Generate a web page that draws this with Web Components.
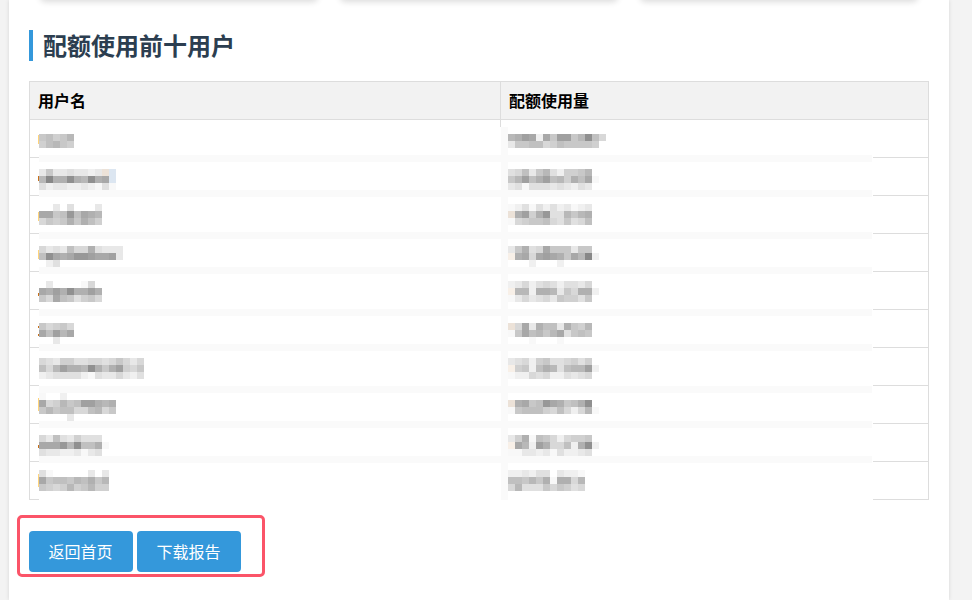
<!DOCTYPE html>
<html lang="zh-CN">
<head>
<meta charset="utf-8">
<title>配额使用报告</title>
<style>
  html, body { margin: 0; height: 100%; overflow: hidden; background: #f3f3f3; }
  body { font-family: "Noto Sans CJK SC", "Liberation Sans", sans-serif; }
</style>
</head>
<body>
<report-page>
  <summary-row>
    <summary-card></summary-card>
    <summary-card></summary-card>
    <summary-card></summary-card>
  </summary-row>
  <section-title>配额使用前十用户</section-title>
  <quota-table first-heading="用户名" second-heading="配额使用量" rows="10"></quota-table>
  <report-actions>
    <action-button>返回首页</action-button>
    <action-button>下载报告</action-button>
  </report-actions>
</report-page>

<script>
/**
 * ReportPage Component
 */
class ReportPage extends HTMLElement {
  constructor() {
    super();
    this.attachShadow({ mode: 'open' });
    this.shadowRoot.innerHTML = `
      <style>
        :host {
          display: block;
          box-sizing: border-box;
          width: 940px;
          height: 600px;
          margin-left: 9px;
          padding: 0 20px;
          background: #fff;
          box-shadow: 0 0 4px rgba(0, 0, 0, 0.12);
          overflow: hidden;
        }
      </style>
      <slot></slot>
    `;
  }
}

/**
 * SummaryRow Component - the stat cards, scrolled off the top of the page
 */
class SummaryRow extends HTMLElement {
  constructor() {
    super();
    this.attachShadow({ mode: 'open' });
    this.shadowRoot.innerHTML = `
      <style>
        :host {
          display: flex;
          gap: 22px;
          height: 60px;
          margin-top: -60px;
          padding: 0 11px;
        }
      </style>
      <slot></slot>
    `;
  }
}

class SummaryCard extends HTMLElement {
  constructor() {
    super();
    this.attachShadow({ mode: 'open' });
    this.shadowRoot.innerHTML = `
      <style>
        :host {
          display: block;
          flex: 1;
          background: #fff;
          border-radius: 5px;
          box-shadow: 0 2px 6px rgba(0, 0, 0, 0.14);
        }
      </style>
    `;
  }
}

/**
 * SectionTitle Component
 */
class SectionTitle extends HTMLElement {
  constructor() {
    super();
    this.attachShadow({ mode: 'open' });
    this.shadowRoot.innerHTML = `
      <style>
        :host {
          display: block;
          margin-top: 30px;
          height: 31px;
          line-height: 29px;
          padding-left: 10px;
          border-left: 4px solid #3498db;
          color: #2c3e50;
          font-size: 24px;
          font-weight: 700;
        }
      </style>
      <slot></slot>
    `;
  }
}

/**
 * QuotaTable Component - header, ruled rows and the pixelated layer over them
 */
class QuotaTable extends HTMLElement {
  constructor() {
    super();
    this.attachShadow({ mode: 'open' });
  }

  connectedCallback() {
    this.render();
  }

  render() {
    const rows = Number(this.getAttribute('rows') || 0);
    let body = '';
    for (let i = 0; i < rows; i++) {
      body += '<div class="cell"></div><div class="cell"></div>';
    }

    this.shadowRoot.innerHTML = `
      <style>
        :host {
          display: block;
          position: relative;
          margin-top: 20px;
        }
        .grid {
          display: grid;
          grid-template-columns: 471px 1fr;
          border: 1px solid #ddd;
          border-bottom: 0;
        }
        .head {
          box-sizing: border-box;
          height: 38px;
          line-height: 37px;
          padding-left: 8px;
          background: #f2f2f2;
          border-bottom: 1px solid #ddd;
          color: #000;
          font-size: 16px;
          font-weight: 700;
        }
        .head:first-child { border-right: 1px solid #ddd; }
        .cell {
          box-sizing: border-box;
          height: 38px;
          border-bottom: 1px solid #ddd;
        }
        .cell:nth-child(odd) { border-right: 1px solid #ddd; }
        quota-mosaic {
          position: absolute;
          left: 9px;
          top: 46px;
        }
      </style>
      <div class="grid">
        <div class="head">${this.getAttribute('first-heading')}</div>
        <div class="head">${this.getAttribute('second-heading')}</div>
        ${body}
      </div>
      <quota-mosaic></quota-mosaic>
    `;
  }
}

/**
 * QuotaMosaic Component
 *
 * The user names and amounts are redacted in the report, so this paints the
 * 7px blocks. Each string is one row of blocks, one character per block:
 * 0-f grey level, . nothing, W/V warm, B blue.
 */
const BLOCK = 7;

const LEFT_COLUMN = [
  [1, ['87986', '97689']],
  [6, ['c8ccbccdcWB', '6055156154B', 'bdccddcdebe']],
  [11, ['..c.b...c', '448727456', 'a89858579']],
  [17, ['acbc7aa5bccc', '71454223443c', '.db']],
  [22, ['.c....ea.', '453515535', '8a478b98a']],
  [28, ['8a98a', '47364', '..c']],
  [33, ['abc99bbaaba8aca', '7a63556158539a8', 'dcbbbbdebccacdb']],
  [38, ['e..d', '4a968733565', '86877aa76a8', '....c']],
  [44, ['ac7bc9bbb', '444261775e', 'bccddcecb']],
  [49, ['be.....c.c', '4877867586', '89a9698699']]
];

const RIGHT_COLUMN = [
  [1, ['6534d48338617a', 'c8877a9788889']],
  [6, ['ba7c86bd9986', '863753769574e', 'cbebbbcbcdbc']],
  [11, ['edbebdbdcedc', 'W53952bb6865', 'ea9887ab8ba7']],
  [17, ['c85ba4888c88', 'V54a43458460d', '...d...d']],
  [22, ['dcadbabdbbca', 'V66d556c8a55d', 'ecacbac899b8']],
  [28, ['Wa4c577c5896', 'e8476864b878', '...e...e']],
  [33, ['cbad98bba9b9', 'V98d756b7663d', 'eddabaddbcba']],
  [39, ['W54872458751', 'e87779a7ada6e']],
  [44, ['c95e78ada998', 'V46d35aa7d51d', 'eeccdcebddcb']],
  [49, ['ddcdbb.cdde', '778685e55a6', 'a6bbb8a89ba']]
];

// 1px fringe left of the first column
const FRINGE = [
  [135, 9, '#ffd47a'], [176, 5, '#c8701a'], [212, 9, '#ffd47a'], [250, 9, '#ffd47a'],
  [293, 3, '#c8701a'], [326, 2, '#c8701a'], [334, 2, '#c8701a'], [398, 13, '#ffd47a'],
  [445, 3, '#c8701a'], [474, 13, '#ffd47a']
];

const STRIP_ROWS = [4, 9, 15, 20, 26, 31, 37, 42, 47];

class QuotaMosaic extends HTMLElement {
  constructor() {
    super();
    this.attachShadow({ mode: 'open' });
    this.render();
  }

  blockColor(ch) {
    if (ch === 'W') return '#ece2d8';
    if (ch === 'V') return '#f8f0e8';
    if (ch === 'B') return '#dce6f1';
    const grey = Math.min(255, 0x88 + parseInt(ch, 16) * 8);
    return `rgb(${grey},${grey},${grey})`;
  }

  blocks(column, startCol) {
    let out = '';
    column.forEach(([top, lines]) => {
      lines.forEach((line, r) => {
        [...line].forEach((ch, c) => {
          if (ch === '.') return;
          const x = 1 + (startCol + c) * BLOCK;
          const y = (top + r) * BLOCK;
          out += `<rect x="${x}" y="${y}" width="${BLOCK}" height="${BLOCK}" fill="${this.blockColor(ch)}"/>`;
        });
      });
    });
    return out;
  }

  render() {
    const strips = STRIP_ROWS.map(r =>
      `<rect x="1" y="${r * BLOCK}" width="833" height="${BLOCK}" fill="#fafafa"/>`).join('');
    const fringe = FRINGE.map(([y, h, fill]) =>
      `<rect x="0" y="${y - 127}" width="1" height="${h}" fill="${fill}"/>`).join('');

    this.shadowRoot.innerHTML = `
      <style>
        :host { display: block; width: 835px; height: 373px; }
        svg { display: block; }
      </style>
      <svg width="835" height="373" viewBox="0 0 835 373" shape-rendering="crispEdges">
        <rect x="1" y="0" width="834" height="373" fill="#fff"/>
        ${strips}
        <rect x="${1 + 66 * BLOCK}" y="0" width="${BLOCK}" height="373" fill="#fafafa"/>
        ${fringe}
        ${this.blocks(LEFT_COLUMN, 0)}
        ${this.blocks(RIGHT_COLUMN, 67)}
      </svg>
    `;
  }
}

/**
 * ReportActions Component - buttons, with the red review marker drawn over them
 */
class ReportActions extends HTMLElement {
  constructor() {
    super();
    this.attachShadow({ mode: 'open' });
    this.shadowRoot.innerHTML = `
      <style>
        :host {
          display: flex;
          gap: 4px;
          position: relative;
          margin-top: 31px;
        }
        .marker {
          position: absolute;
          left: -12px;
          top: -16px;
          width: 248px;
          height: 62px;
          box-sizing: border-box;
          border: 3px solid #fb5468;
          border-radius: 5px;
          pointer-events: none;
        }
      </style>
      <slot></slot>
      <div class="marker"></div>
    `;
  }
}

/**
 * ActionButton Component
 */
class ActionButton extends HTMLElement {
  constructor() {
    super();
    this.attachShadow({ mode: 'open' });
    this.shadowRoot.innerHTML = `
      <style>
        :host { display: block; }
        button {
          display: block;
          box-sizing: border-box;
          width: 104px;
          height: 41px;
          padding: 0 1px 2px 0;
          border: 0;
          border-radius: 4px;
          background: #3498db;
          color: #fff;
          font: 400 16px "Noto Sans CJK SC", "Liberation Sans", sans-serif;
          cursor: pointer;
        }
      </style>
      <button type="button"><slot></slot></button>
    `;
  }
}

customElements.define('report-page', ReportPage);
customElements.define('summary-row', SummaryRow);
customElements.define('summary-card', SummaryCard);
customElements.define('section-title', SectionTitle);
customElements.define('quota-mosaic', QuotaMosaic);
customElements.define('quota-table', QuotaTable);
customElements.define('report-actions', ReportActions);
customElements.define('action-button', ActionButton);
</script>
</body>
</html>
